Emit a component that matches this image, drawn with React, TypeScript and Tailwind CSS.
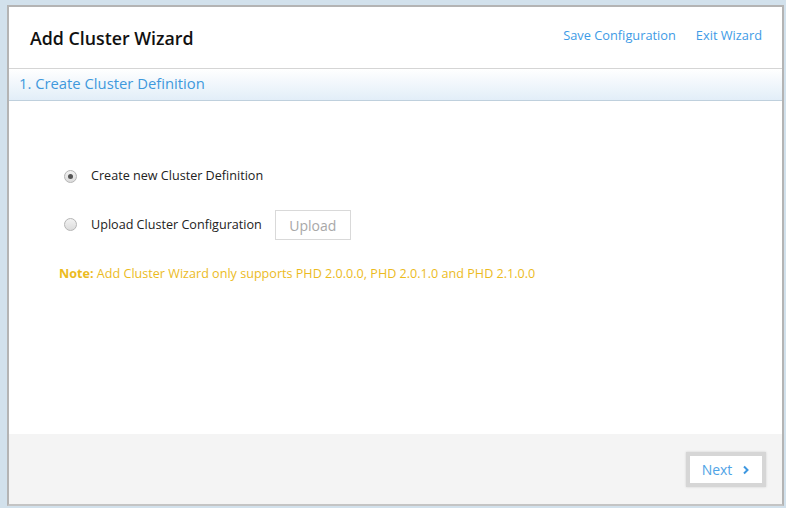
import React from "react";

const Radio = ({ checked }: { checked?: boolean }) => (
  <span className="w-[13px] h-[13px] rounded-full border border-[#b5b5b5] bg-gradient-to-b from-[#f2f2f2] to-[#dcdcdc] flex items-center justify-center shrink-0">
    {checked && <span className="w-[5px] h-[5px] rounded-full bg-[#555]" />}
  </span>
);

const App = () => {
  return (
    <div className="w-[786px] h-[508px] bg-[#d2e1ec] pt-[5px] pl-[7px] pr-[2px] pb-[2px] font-['Open_Sans',sans-serif]">
      <div className="w-[777px] h-[501px] border-2 border-[#b4b4b4] border-b-[#c4c4c4] bg-white flex flex-col">
        <div className="h-[62px] flex items-center justify-between pl-[21px] pr-[20px] border-b border-[#d5d5d5]">
          <h1 className="text-[17.8px] font-semibold text-[#111] mt-[1px]">Add Cluster Wizard</h1>
          <div className="flex gap-[20px] text-[12.8px] text-[#3e9be6] -mt-[4px]">
            <span>Save Configuration</span>
            <span>Exit Wizard</span>
          </div>
        </div>
        <div className="h-[32px] flex items-center pl-[10px] bg-gradient-to-b from-white to-[#e2eef8] border-b border-[#bfd0dd]">
          <span className="text-[14.8px] text-[#3f99dc] -mt-[2px]">1. Create Cluster Definition</span>
        </div>
        <div className="flex-1 pl-[55px] pt-[65px] flex flex-col">
          <label className="flex items-center gap-[14px] h-[20px]">
            <Radio checked />
            <span className="text-[12.6px] text-[#222]">Create new Cluster Definition</span>
          </label>
          <label className="flex items-center mt-[24px]">
            <span className="flex items-center gap-[14px]">
              <Radio />
              <span className="text-[12.6px] text-[#222]">Upload Cluster Configuration</span>
            </span>
            <button className="ml-[13px] w-[76px] h-[30px] border border-[#d9d9d9] text-[14px] text-[#a8a8a8] bg-white">
              Upload
            </button>
          </label>
          <p className="mt-[25px] -ml-[5px] text-[12.6px] text-[#ecbb1e]">
            <span className="font-bold">Note:</span> Add Cluster Wizard only supports PHD 2.0.0.0, PHD 2.0.1.0 and PHD 2.1.0.0
          </p>
        </div>
        <div className="h-[70px] bg-[#f4f4f4] flex items-center justify-end pr-[16px]">
          <button className="w-[80px] h-[35px] bg-white border-[4px] border-[#d6d6d6] shadow-[0_0_2px_#cfcfcf] flex items-center justify-center gap-[10px] text-[14px] text-[#4fa3e6]">
            Next
            <svg width="8" height="10" viewBox="0 0 8 10" className="mt-[1px]">
              <path d="M2 1.5 L5.5 5 L2 8.5" fill="none" stroke="#3d97e0" strokeWidth="2" />
            </svg>
          </button>
        </div>
      </div>
    </div>
  );
};

export default App;
